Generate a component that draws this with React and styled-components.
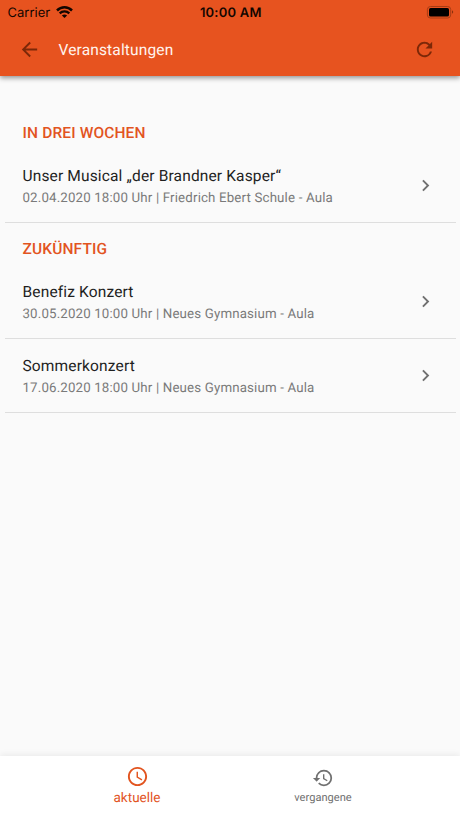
import React, { useState } from 'react';
import styled, { createGlobalStyle } from 'styled-components';
import { MdAccessTime, MdArrowBack, MdChevronRight, MdHistory, MdRefresh } from 'react-icons/md';

const GlobalStyle = createGlobalStyle`
  * {
    box-sizing: border-box;
  }

  body {
    margin: 0;
    background-color: #fafafa;
    font-family: Roboto, 'Liberation Sans', sans-serif;
    text-rendering: geometricPrecision;
  }
`;

const Screen = styled.div`
  display: flex;
  flex-direction: column;
  height: 100vh;
  background-color: #fafafa;
`;

const Header = styled.header`
  height: 76px;
  flex-shrink: 0;
  background-color: #e7531f;
  box-shadow: 0 2px 5px rgba(0, 0, 0, 0.42);
`;

const StatusBar = styled.div`
  display: grid;
  grid-template-columns: 1fr auto 1fr;
  align-items: center;
  height: 24px;
  padding: 1px 6px 0 7.5px;
  color: #120600;
  font-family: Inter, sans-serif;
  font-size: 13px;
`;

const Carrier = styled.div`
  display: flex;
  align-items: center;
  gap: 5.5px;
`;

const Clock = styled.div`
  font-weight: 600;
  letter-spacing: 0.2px;
`;

const Battery = styled.svg`
  display: block;
  justify-self: end;
`;

const AppBar = styled.div`
  display: flex;
  align-items: center;
  height: 51px;
  padding: 0 24px 0 18px;
`;

const IconButton = styled.button`
  display: flex;
  padding: 0;
  border: none;
  background: none;
  color: #7c2808;
  font-size: 23px;
`;

const Title = styled.h1`
  flex: 1;
  margin: 0 0 0 17.5px;
  color: #fff3ee;
  font-size: 15.5px;
  font-weight: 400;
  letter-spacing: 0.15px;
`;

const Content = styled.main`
  flex: 1;
  padding: 31px 4px 0 5px;
`;

const SectionTitle = styled.h2`
  height: 41px;
  margin: 0;
  padding: 11px 17.5px 0;
  color: #e2541f;
  font-size: 15.5px;
  font-weight: 500;
  line-height: 30px;
  letter-spacing: 0.13px;
`;

const EventRow = styled.div`
  display: flex;
  align-items: center;
  justify-content: space-between;
  height: ${(props) => (props.$first ? '75px' : '74px')};
  padding: 0 19px 0 17.5px;
  border-bottom: 1px solid #dedede;
  color: #707070;

  svg {
    font-size: 23px;
  }
`;

const EventName = styled.div`
  padding-top: 4px;
  color: #1f1f1f;
  font-size: 15.5px;
  line-height: 22px;
  letter-spacing: 0.15px;
`;

const EventInfo = styled.div`
  color: #7a7a7a;
  font-size: 13.3px;
  line-height: 23px;
  letter-spacing: 0.15px;
`;

const Navigation = styled.nav`
  display: flex;
  justify-content: center;
  height: 62px;
  flex-shrink: 0;
  background-color: #fff;
  box-shadow: 0 -2px 6px rgba(0, 0, 0, 0.06);
`;

const Tab = styled.button`
  display: flex;
  flex-direction: column;
  align-items: center;
  width: 186px;
  padding: ${(props) => (props.$active ? '9px' : '11px')} 0 0;
  border: none;
  background: none;
  color: ${(props) => (props.$active ? '#e2541f' : '#707070')};
  font-family: inherit;
  font-size: ${(props) => (props.$active ? '13.5px' : '11.1px')};
  line-height: ${(props) => (props.$active ? '20px' : '18px')};
  text-rendering: inherit;

  svg {
    font-size: ${(props) => (props.$active ? '23px' : '22px')};
  }
`;

const sections = [
  {
    title: 'IN DREI WOCHEN',
    events: [
      {
        name: 'Unser Musical „der Brandner Kasper“',
        info: '02.04.2020 18:00 Uhr | Friedrich Ebert Schule - Aula',
      },
    ],
  },
  {
    title: 'ZUKÜNFTIG',
    events: [
      { name: 'Benefiz Konzert', info: '30.05.2020 10:00 Uhr | Neues Gymnasium - Aula' },
      { name: 'Sommerkonzert', info: '17.06.2020 18:00 Uhr | Neues Gymnasium - Aula' },
    ],
  },
];

const WifiIcon = () => (
  <svg width="17" height="13" viewBox="0 0 17 13" fill="none" stroke="currentColor">
    <path d="M1 4.5C5.2 0.3 11.8 0.3 16 4.5" strokeWidth="2.5" />
    <path d="M3.7 7.4C6.3 4.8 10.7 4.8 13.3 7.4" strokeWidth="2.3" />
    <path d="M8.5 12L5.9 9.4C7.3 8.1 9.7 8.1 11.1 9.4Z" fill="currentColor" stroke="none" />
  </svg>
);

const App = () => {
  const [tab, setTab] = useState('aktuelle');

  return (
    <Screen>
      <GlobalStyle />
      <Header>
        <StatusBar>
          <Carrier>
            Carrier
            <WifiIcon />
          </Carrier>
          <Clock>10:00 AM</Clock>
          <Battery width="28" height="13" viewBox="0 0 28 13">
            <rect x="1.4" y="0.5" width="23.3" height="11.5" rx="3" fill="none" stroke="#a83c14" />
            <rect x="3" y="1.9" width="20" height="8.7" rx="1.6" fill="#000" />
            <path d="M26 4.3C27.6 4.9 27.6 7.2 26 7.8Z" fill="#8a310f" />
          </Battery>
        </StatusBar>
        <AppBar>
          <IconButton aria-label="Zurück">
            <MdArrowBack />
          </IconButton>
          <Title>Veranstaltungen</Title>
          <IconButton aria-label="Aktualisieren">
            <MdRefresh />
          </IconButton>
        </AppBar>
      </Header>
      <Content>
        {sections.map((section) => (
          <section key={section.title}>
            <SectionTitle>{section.title}</SectionTitle>
            {section.events.map((event, index) => (
              <EventRow key={event.name} $first={index === 0}>
                <div>
                  <EventName>{event.name}</EventName>
                  <EventInfo>{event.info}</EventInfo>
                </div>
                <MdChevronRight />
              </EventRow>
            ))}
          </section>
        ))}
      </Content>
      <Navigation>
        <Tab $active={tab === 'aktuelle'} onClick={() => setTab('aktuelle')}>
          <MdAccessTime />
          aktuelle
        </Tab>
        <Tab $active={tab === 'vergangene'} onClick={() => setTab('vergangene')}>
          <MdHistory />
          vergangene
        </Tab>
      </Navigation>
    </Screen>
  );
};

export default App;
